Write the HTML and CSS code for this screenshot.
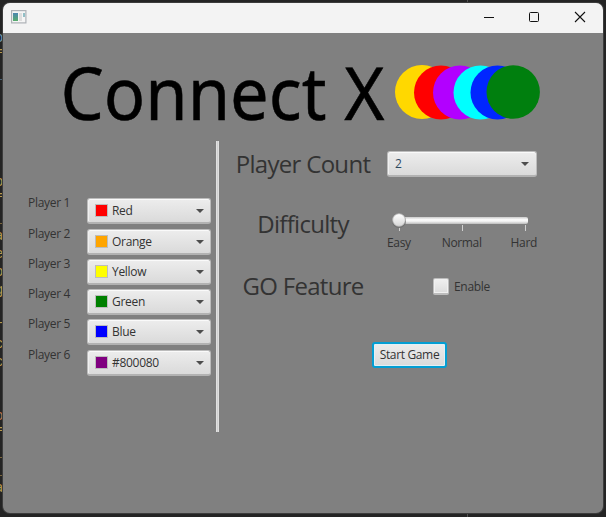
FILE: index.html
```
<!DOCTYPE html>
<html lang="en">
<head>
<meta charset="utf-8">
<title>Connect X</title>
<link rel="stylesheet" href="styles.css">
</head>
<body>
<div class="guide"></div>
<div class="editor"><div class="code"><span class="blue">o</span><br><span>f</span><br><span class="blue">_</span><br><br><br><br><br><br>o<br>f<br>_<br>a<br>e<br>o<br>g<br><br>r<br>c<br>c<br><br><br><span class="red">o</span><br>f<br>_<br>_<br>a</div></div>
<div class="window">
  <header class="titlebar">
    <svg class="appicon" width="16" height="14" viewBox="0 0 16 14"><rect x=".6" y=".6" width="14.3" height="12.3" fill="#f5f5f5" stroke="#aeb2b7" stroke-width="1.2"/><defs><linearGradient id="g" x2="0" y2="1"><stop stop-color="#4c86b0"/><stop offset="1" stop-color="#57ac6b"/></linearGradient></defs><rect x="2" y="3" width="5" height="8" fill="url(#g)"/><rect x="8" y="3" width="3" height="8" fill="#dedede"/><rect x="12" y="3" width="2" height="4" fill="#91bfc6"/></svg>
    <svg class="controls" width="104" height="12" viewBox="0 0 104 12" fill="none" stroke="#111"><path d="M1 6.5h10" /><rect x="46.5" y="1.5" width="9" height="9" rx="1"/><path d="M92 1l10 10M102 1L92 11" stroke-width="1.1"/></svg>
  </header>
  <svg class="logo" width="600" height="108" viewBox="3 33 600 108">
    <text x="60.5" y="119.5" textLength="324" lengthAdjust="spacingAndGlyphs" stroke="#000" stroke-width=".5">Connect X</text>
    <circle cx="422" cy="92" r="27" fill="#ffd800"/>
    <circle cx="441" cy="92.5" r="27" fill="red"/>
    <circle cx="460" cy="92.5" r="27" fill="#b200ff"/>
    <circle cx="480.5" cy="92.5" r="27" fill="#00ffff"/>
    <circle cx="497.5" cy="92.5" r="27" fill="#0026ff"/>
    <circle cx="513.2" cy="92" r="26.7" fill="#007f0e"/>
  </svg>
  <main class="main">
    <section class="players">
      <div class="row"><label>Player 1</label><div class="combo"><i class="swatch c1"></i><span>Red</span></div></div>
      <div class="row"><label>Player 2</label><div class="combo"><i class="swatch c2"></i><span>Orange</span></div></div>
      <div class="row"><label>Player 3</label><div class="combo"><i class="swatch c3"></i><span>Yellow</span></div></div>
      <div class="row"><label>Player 4</label><div class="combo"><i class="swatch c4"></i><span>Green</span></div></div>
      <div class="row"><label>Player 5</label><div class="combo"><i class="swatch c5"></i><span>Blue</span></div></div>
      <div class="row"><label>Player 6</label><div class="combo"><i class="swatch c6"></i><span>#800080</span></div></div>
    </section>
    <div class="separator"></div>
    <section class="settings">
      <h2>Player Count</h2>
      <div class="combo wide"><span>2</span></div>
      <h2>Difficulty</h2>
      <div class="slider">
        <svg width="150" height="24" viewBox="387 210 150 24"><defs><linearGradient id="track" x2="0" y2="1"><stop stop-color="#cacaca"/><stop offset=".4" stop-color="#fff"/><stop offset=".65" stop-color="#eee"/><stop offset="1" stop-color="#bcbcbc"/></linearGradient><linearGradient id="thumb" x2="0" y2="1"><stop stop-color="#fff"/><stop offset="1" stop-color="#d6d6d6"/></linearGradient></defs><rect x="394" y="216" width="134" height="7" rx="2" fill="url(#track)"/><path d="M399.5 224v6M462.5 224v6M525.5 224v6" stroke="#d0d0d0"/><circle cx="399" cy="220" r="7" fill="#707070"/><circle cx="399" cy="219" r="6.3" fill="url(#thumb)" stroke="#b9b9b9" stroke-width=".8"/></svg>
        <div class="ticks"><span>Easy</span><span>Normal</span><span>Hard</span></div>
      </div>
      <h2>GO Feature</h2>
      <label class="check"><i class="box"></i>Enable</label>
      <button class="start">Start Game</button>
    </section>
  </main>
</div>
</body>
</html>
```

FILE: styles.css
```
* { box-sizing: border-box; }
body { margin: 0; width: 606px; height: 517px; overflow: hidden; padding: 3px; background: #242424; font: 12px/16px "Open Sans", "Noto Sans", sans-serif; letter-spacing: -.3px; color: #333; position: relative; }
.guide { position: absolute; left: 467px; top: 0; width: 1px; height: 517px; background: #505050; }
.editor { position: absolute; left: 0; top: 29px; width: 3px; height: 480px; overflow: hidden; }
.code { font: 14px/18px "Liberation Mono", monospace; color: #b6984f; margin-left: -5px; }
.code .blue { color: #6b93ad; }
.code .red { color: #b7744f; }
.window { width: 600px; height: 510px; background: #808080; border-radius: 7px; overflow: hidden; box-shadow: 0 0 0 1px #3c3c3c; position: relative; }
.titlebar { height: 30px; background: #f3f3f3; display: flex; justify-content: space-between; align-items: center; padding: 0 16px 2px 8px; }
.logo { display: block; font: 73.5px "Noto Sans", sans-serif; letter-spacing: 0; }
.main { display: flex; height: 291px; padding-left: 25px; }
.players { width: 183px; padding-top: 57px; margin-right: 5px; }
.row { display: flex; height: 30px; justify-content: space-between; }
.row:nth-child(1), .row:nth-child(5) { height: 31px; }
.row label { line-height: 10px; }
.combo { width: 124px; height: 26px; border: 1px solid #bcbcbc; border-bottom: 2px solid #b2b2b2; border-radius: 3px; background: linear-gradient(#ededed, #dadada); box-shadow: inset 0 1px #fafafa, inset 1px 0 #f0f0f0; display: flex; align-items: center; padding: 0 6px 0 7px; }
.combo::after { content: ""; margin-left: auto; border: 4px solid transparent; border-top-color: #4d4d4d; border-bottom: 0; }
.swatch { width: 13px; height: 13px; border: 1px solid #bdbdbd; margin-right: 4px; }
.c1 { background: red; }
.c2 { background: orange; }
.c3 { background: yellow; }
.c4 { background: green; }
.c5 { background: blue; }
.c6 { background: purple; }
.separator { width: 3px; height: 291px; background: #d0d0d0; border: solid #e0e0e0; border-width: 0 1px; }
.settings { display: grid; grid-template-columns: 168px 150px; grid-template-rows: 46px 74px 50px 87px; align-items: center; }
h2 { margin: 0 0 1px; font: 24px/32px "Open Sans", sans-serif; letter-spacing: -.7px; text-align: center; white-space: nowrap; }
.combo.wide { width: 150px; padding-right: 7px; }
.combo.wide span { color: #2d4960; }
.slider { height: 42px; margin-top: 16px; }
.slider svg { display: block; }
.ticks { display: flex; justify-content: space-between; line-height: 16px; letter-spacing: -.35px; }
.ticks span:nth-child(2) { margin-left: 2px; }
.check { display: flex; align-items: center; margin: 1px 0 0 46px; gap: 5px; }
.box { width: 16px; height: 17px; border: 1px solid #bcbcbc; border-bottom-width: 2px; border-radius: 2px; background: linear-gradient(#f0f0f0, #dcdcdc); box-shadow: inset 0 0 0 1px #f0f0f0; }
.start { grid-column: 1 / 3; margin-left: 153px; width: 75px; height: 26px; border: 2px solid #039ed3; border-radius: 3px; background: linear-gradient(#ececec, #dadada); box-shadow: inset 0 0 0 1px #e2f0f5; font: inherit; letter-spacing: -.35px; color: #333; padding: 0; white-space: nowrap; }
```
